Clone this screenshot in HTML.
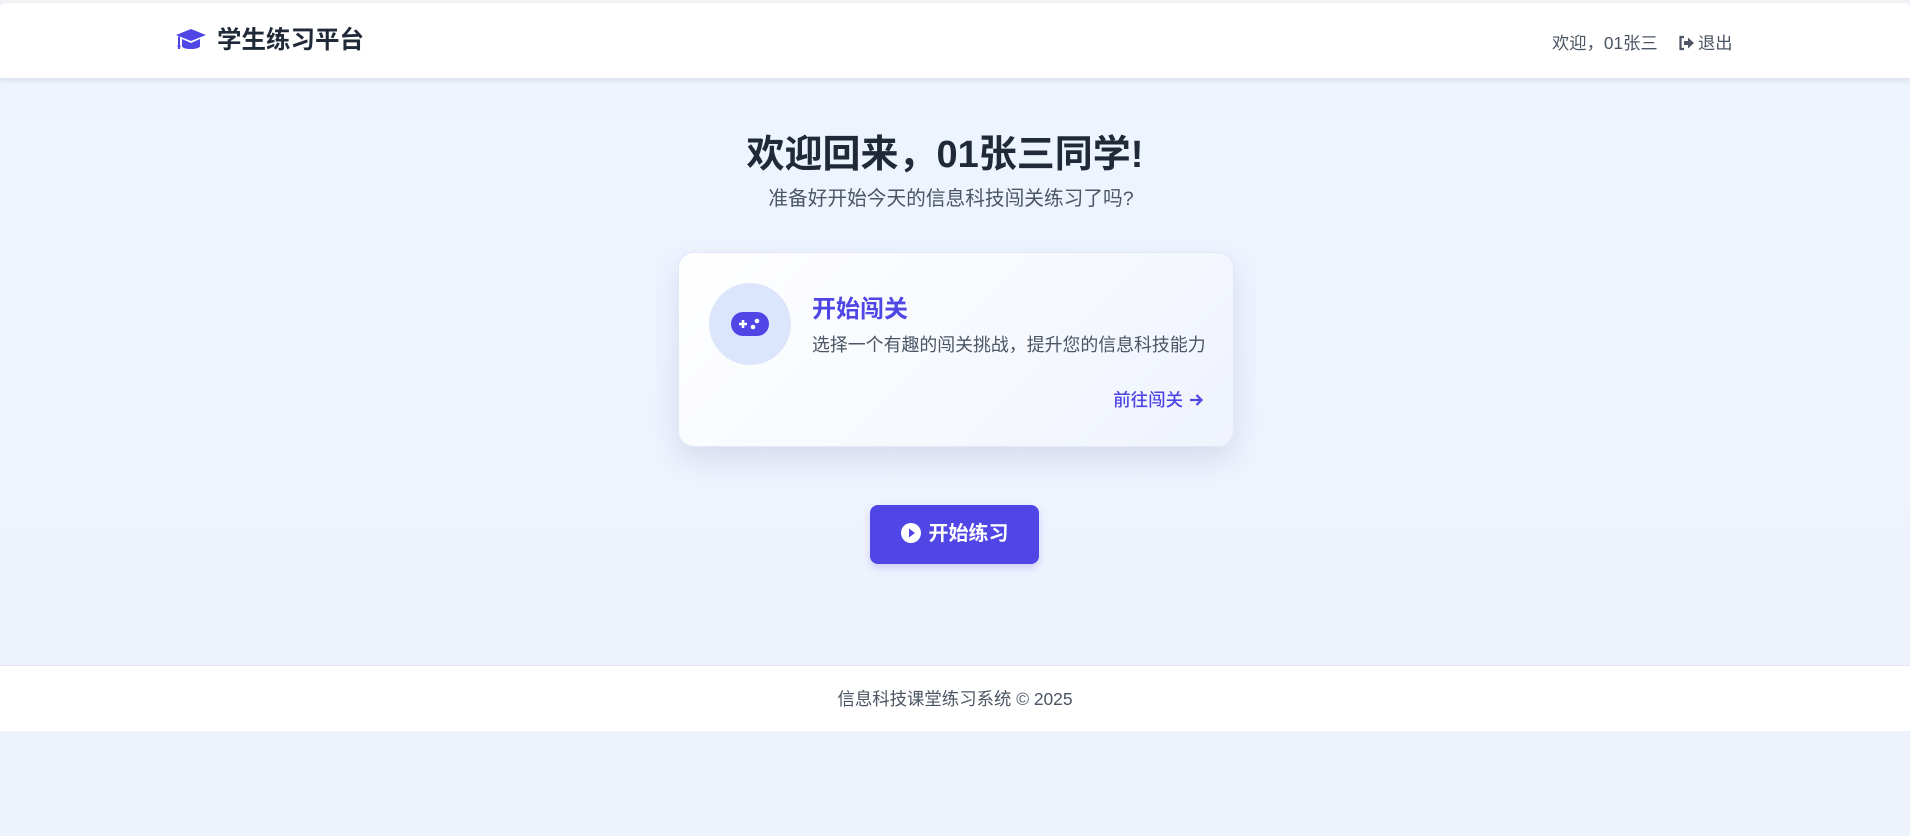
<!DOCTYPE html>
<html><head><meta charset="utf-8">
<style>
*{margin:0;padding:0;box-sizing:border-box}
html,body{width:1910px;height:836px;overflow:hidden}
body{background:#eef2fd;font-family:"Liberation Sans","Noto Sans CJK SC",sans-serif;position:relative}
.top{position:absolute;left:0;top:0;width:1910px;height:665px;background:linear-gradient(#eef5ff,#eef2fd)}
.bar{position:absolute;left:0;top:0;width:1910px;height:3px;background:#f1f2f4}
header{position:absolute;left:0;top:3px;width:1910px;height:75px;background:#fff;border-radius:6px 6px 0 0;box-shadow:0 3px 6px rgba(0,0,0,0.08)}
.logo{position:absolute;left:175px;top:25px}
.brand{position:absolute;left:217px;top:22px;font-size:24.5px;font-weight:bold;color:#1f2937;line-height:32px}
.user{position:absolute;left:1552px;top:29px;font-size:17.3px;color:#4b5563;line-height:22px}
.out{position:absolute;left:1678px;top:29px;font-size:17.3px;color:#4b5563;line-height:22px}
.out svg{vertical-align:-2px;margin-right:3px}
h1{position:absolute;left:-10px;width:1910px;top:131px;text-align:center;font-size:38px;font-weight:bold;color:#1f2937;line-height:48px}
.sub{position:absolute;left:-4px;width:1910px;top:186px;text-align:center;font-size:19.7px;color:#4b5563;line-height:26px}
.card{position:absolute;left:678px;top:252px;width:556px;height:195px;border-radius:16px;background:linear-gradient(135deg,#ffffff,#eff3fd);border:1px solid #e3e8f6;box-shadow:0 12px 28px rgba(80,90,140,0.15)}
.circ{position:absolute;left:30px;top:30px;width:82px;height:82px;border-radius:50%;background:#dbe6fc}
.ct{position:absolute;left:133px;top:41px;font-size:24px;font-weight:bold;color:#4f46e5;line-height:32px}
.cd{position:absolute;left:133px;top:80px;font-size:17.9px;color:#4b5563;line-height:24px;white-space:nowrap}
.go{position:absolute;right:29px;top:135px;font-size:17.5px;color:#4f46e5;line-height:24px;font-weight:500}
.go svg{vertical-align:-2px}
.btn{position:absolute;left:870px;top:505px;width:169px;height:59px;border-radius:8px;background:#4f46e5;color:#fff;font-size:20px;font-weight:bold;line-height:59px;text-align:center;box-shadow:0 4px 8px rgba(79,70,229,0.2)}
.btn svg{vertical-align:-3px;margin-right:8px}
footer{position:absolute;left:0;top:665px;width:1910px;height:66px;background:#fff;border-top:1px solid #e2e6f0;text-align:center;font-size:17.4px;color:#4b5563;line-height:66px}
</style></head><body>
<div class="top"></div>
<div class="bar"></div>
<header>
<svg class="logo" width="32" height="24" viewBox="0 0 32 24"><path d="M16 1 L31 7 L16 13 L1 7 Z" fill="#4f46e5"/><path d="M7 11 L7 18 C7 22 25 22 25 18 L25 11 L16 15 Z" fill="#4f46e5"/><path d="M4 8.5 L4 17" stroke="#4f46e5" stroke-width="2"/><path d="M2.5 17 L5.5 17 L5 21 L3 21Z" fill="#4f46e5"/></svg>
<div class="brand">学生练习平台</div>
<div class="user">欢迎，01张三</div>
<div class="out"><svg width="17" height="16" viewBox="0 0 17 16"><path d="M6 2 H2.5 V14 H6" stroke="#4b5563" stroke-width="2.2" fill="none"/><path d="M6 6 H10 V2.5 L16 8 L10 13.5 V10 H6 Z" fill="#4b5563"/></svg>退出</div>
</header>
<h1>欢迎回来，01张三同学!</h1>
<div class="sub">准备好开始今天的信息科技闯关练习了吗?</div>
<div class="card">
<div class="circ"><svg style="position:absolute;left:21px;top:28px" width="40" height="26" viewBox="0 0 40 26"><rect x="1" y="1" width="38" height="24" rx="12" fill="#4f46e5"/><path d="M9 13 H17 M13 9 V17" stroke="#fff" stroke-width="2.6"/><circle cx="27" cy="10" r="2.3" fill="#fff"/><circle cx="23" cy="16" r="2.3" fill="#fff"/></svg></div>
<div class="ct">开始闯关</div>
<div class="cd">选择一个有趣的闯关挑战，提升您的信息科技能力</div>
<div class="go">前往闯关 <svg width="16" height="16" viewBox="0 0 16 16"><path d="M2 8 H13 M8.5 3 L13.5 8 L8.5 13" stroke="#4f46e5" stroke-width="2.2" fill="none"/></svg></div>
</div>
<div class="btn"><svg width="20" height="20" viewBox="0 0 20 20"><circle cx="10" cy="10" r="10" fill="#fff"/><path d="M8 5.5 L14 10 L8 14.5 Z" fill="#4f46e5"/></svg>开始练习</div>
<footer>信息科技课堂练习系统 © 2025</footer>
</body></html>
